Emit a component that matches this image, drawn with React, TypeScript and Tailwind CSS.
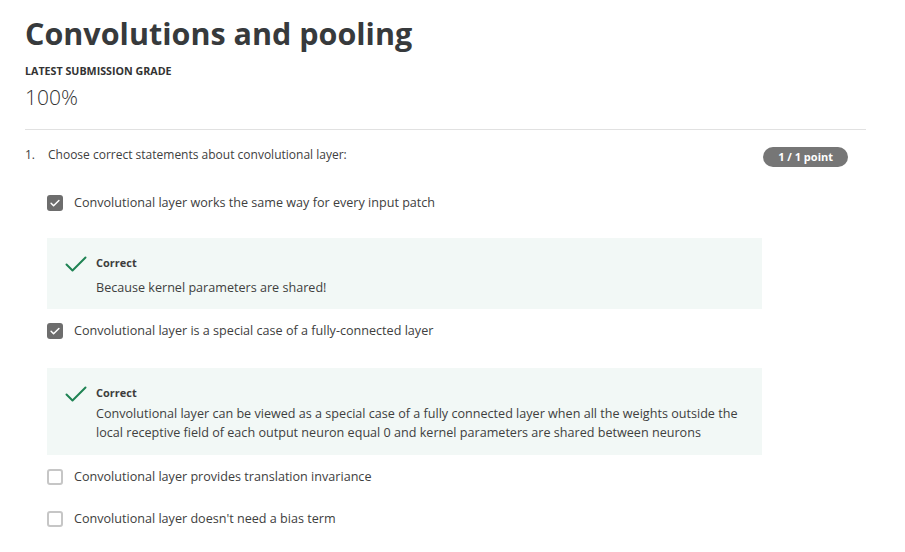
import React from 'react';

interface Option {
  label: string;
  checked: boolean;
  feedback?: string;
  multiline?: boolean;
}

const options: Option[] = [
  {
    label: 'Convolutional layer works the same way for every input patch',
    checked: true,
    feedback: 'Because kernel parameters are shared!',
  },
  {
    label: 'Convolutional layer is a special case of a fully-connected layer',
    checked: true,
    multiline: true,
    feedback:
      'Convolutional layer can be viewed as a special case of a fully connected layer when all the weights outside the local receptive field of each output neuron equal 0 and kernel parameters are shared between neurons',
  },
  { label: 'Convolutional layer provides translation invariance', checked: false },
  { label: "Convolutional layer doesn't need a bias term", checked: false },
];

function Checkbox({ checked }: { checked: boolean }) {
  if (checked) {
    return (
      <span className="flex h-4 w-4 shrink-0 items-center justify-center rounded-[3px] bg-[#6d6d6d]">
        <svg viewBox="0 0 16 16" className="h-3 w-3" fill="none">
          <path d="M2.8 8.3l3.3 3.3L13.2 4.6" stroke="white" strokeWidth="2" strokeLinecap="round" strokeLinejoin="round" />
        </svg>
      </span>
    );
  }
  return <span className="h-4 w-4 shrink-0 rounded-[3px] border-2 border-[#c6c6c6] bg-white" />;
}

function Feedback({ text, multiline }: { text: string; multiline?: boolean }) {
  return (
    <div className={`flex gap-[9px] bg-[#f2f8f6] pl-[18px] pr-6 pt-[17px] ${multiline ? 'pb-[13px]' : 'pb-[12px]'}`}>
      <svg viewBox="0 0 22 16" className="mt-[1px] h-4 w-[22px] shrink-0" fill="none">
        <path d="M1.5 8.5l6 6L20.5 1.5" stroke="#1f8354" strokeWidth="2" strokeLinecap="round" strokeLinejoin="round" />
      </svg>
      <div>
        <div className="text-[11px] font-bold leading-4 text-[#3d3d3d]">Correct</div>
        <div className={`${multiline ? 'mt-[3px]' : 'mt-[7px]'} text-[12.6px] leading-[19px] text-[#404040]`}>{text}</div>
      </div>
    </div>
  );
}

export default function App() {
  return (
    <div
      className="min-h-[552px] w-[905px] bg-white pl-[25px] pr-[39px] text-[#404040]"
      style={{ fontFamily: '"Open Sans", sans-serif' }}
    >
      <h1 className="pt-[12px] text-[30.5px] font-bold leading-[42px] text-[#373a3c]">Convolutions and pooling</h1>
      <div className="mt-[9px] text-[10.7px] font-bold leading-4 text-[#333]">LATEST SUBMISSION GRADE</div>
      <div className="mt-[3px] text-[21px] font-light leading-[30px] text-[#333]">100%</div>
      <div className="mt-[17px] h-px bg-[#e1e1e1]" />

      <div className="mt-[16px] flex items-start justify-between">
        <div className="flex text-[12px] leading-[18px] text-[#404040]">
          <span className="w-[23px]">1.</span>
          <span>Choose correct statements about convolutional layer:</span>
        </div>
        <span className="mr-[18px] mt-[1px] rounded-full bg-[#767676] px-[15px] py-[2px] text-[11px] font-bold leading-4 text-white">
          1 / 1 point
        </span>
      </div>

      <div className="ml-[22px] mt-[27px] w-[715px]">
        {options.map((o, i) => (
          <div key={i}>
            <div className="flex h-[18px] items-center gap-[11px]">
              <Checkbox checked={o.checked} />
              <span className="text-[12.6px] leading-[18px] text-[#404040]">{o.label}</span>
            </div>
            {o.feedback ? (
              <div className={`${o.multiline ? 'mt-[28px]' : 'mt-[26px]'} mb-[13px]`}>
                <Feedback text={o.feedback} multiline={o.multiline} />
              </div>
            ) : (
              <div className="h-[24px]" />
            )}
          </div>
        ))}
      </div>
    </div>
  );
}
